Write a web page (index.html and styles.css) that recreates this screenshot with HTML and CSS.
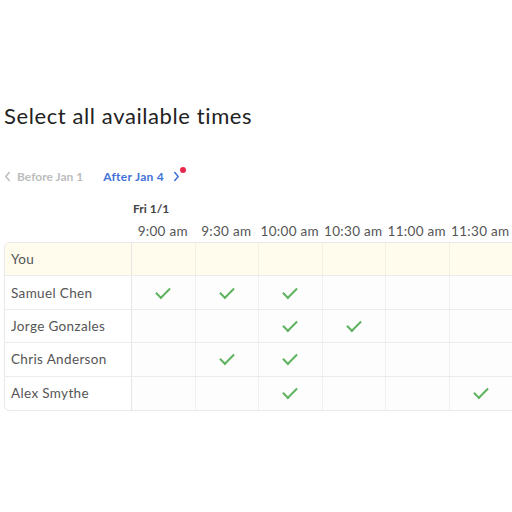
FILE: index.html
```html
<!DOCTYPE html>
<html>
<head>
<meta charset="utf-8">
<link rel="stylesheet" href="styles.css">
</head>
<body>
<div class="page">
  <h1 class="title">Select all available times</h1>
  <div class="nav">
    <span class="nav-prev"><svg class="chev" viewBox="0 0 8 12" width="7" height="11"><path d="M6 1.5 L2 6 L6 10.5" fill="none" stroke="currentColor" stroke-width="1.8" stroke-linecap="round" stroke-linejoin="round"/></svg>Before Jan 1</span>
    <span class="nav-next">After Jan 4<svg class="chev" viewBox="0 0 8 12" width="7" height="11"><path d="M2 1.5 L6 6 L2 10.5" fill="none" stroke="currentColor" stroke-width="1.8" stroke-linecap="round" stroke-linejoin="round"/></svg><span class="dot"></span></span>
  </div>
  <div class="grid head">
    <div class="hcell"></div>
    <div class="hcell date">Fri 1/1</div>
  </div>
  <div class="grid head times">
    <div></div>
    <div>9:00 am</div><div>9:30 am</div><div>10:00 am</div><div>10:30 am</div><div>11:00 am</div><div>11:30 am</div>
  </div>
  <div class="table">
    <div class="grid row you">
      <div class="name">You</div><div class="cell"></div><div class="cell"></div><div class="cell"></div><div class="cell"></div><div class="cell"></div><div class="cell"></div>
    </div>
    <div class="grid row">
      <div class="name">Samuel Chen</div><div class="cell ok"></div><div class="cell ok"></div><div class="cell ok"></div><div class="cell"></div><div class="cell"></div><div class="cell"></div>
    </div>
    <div class="grid row">
      <div class="name">Jorge Gonzales</div><div class="cell"></div><div class="cell"></div><div class="cell ok"></div><div class="cell ok"></div><div class="cell"></div><div class="cell"></div>
    </div>
    <div class="grid row">
      <div class="name">Chris Anderson</div><div class="cell"></div><div class="cell ok"></div><div class="cell ok"></div><div class="cell"></div><div class="cell"></div><div class="cell"></div>
    </div>
    <div class="grid row last">
      <div class="name">Alex Smythe</div><div class="cell"></div><div class="cell"></div><div class="cell ok"></div><div class="cell"></div><div class="cell"></div><div class="cell ok"></div>
    </div>
  </div>
</div>
</body>
</html>
```
FILE: styles.css
```css
html, body {
  margin: 0;
  padding: 0;
  background: #ffffff;
  overflow: hidden;
}
.page {
  width: 512px;
  height: 512px;
  overflow: hidden;
  padding-left: 4px;
  box-sizing: border-box;
  font-family: Lato, "Noto Sans", sans-serif;
}
.title {
  margin: 0;
  padding-top: 102px;
  font-size: 22px;
  font-weight: 400;
  color: #222;
  line-height: 28px;
  letter-spacing: 0.6px;
}
.nav {
  display: flex;
  align-items: center;
  margin-top: 38px;
  height: 16px;
  font-size: 12px;
  font-weight: 700;
}
.nav-prev {
  color: #bdbdbd;
  display: flex;
  align-items: center;
  gap: 6px;
}
.nav-next {
  color: #3f72d8;
  display: flex;
  align-items: center;
  gap: 9px;
  margin-left: 20px;
  position: relative;
  letter-spacing: 0.3px;
}
.dot {
  position: absolute;
  right: -6px;
  top: -2px;
  width: 6px;
  height: 6px;
  border-radius: 50%;
  background: #e8284a;
}
.grid {
  display: grid;
  grid-template-columns: 127px repeat(6, 63.5px);
  width: 508px;
}
.head {
  margin-top: 17px;
  font-size: 12px;
  font-weight: 700;
  color: #444;
  height: 16px;
  line-height: 16px;
}
.date {
  padding-left: 2px;
}
.times {
  margin-top: 6px;
  font-size: 13.5px;
  font-weight: 400;
  color: #555;
  letter-spacing: 0.3px;
}
.times div {
  text-align: center;
  white-space: nowrap;
}
.table {
  margin-top: 3px;
  width: 520px;
  border: 1px solid #e9e9e9;
  border-radius: 5px;
  overflow: hidden;
}
.row {
  height: 33.4px;
  border-bottom: 1px solid #ececec;
  box-sizing: border-box;
}
.row.last {
  border-bottom: none;
}
.you {
  background: #fffcee;
}
.name {
  font-size: 13.5px;
  color: #555;
  padding-left: 6px;
  display: flex;
  align-items: center;
  border-right: 1px solid #e6e6e6;
  letter-spacing: 0.35px;
}
.cell {
  border-right: 1px solid #f0f0f0;
  position: relative;
  background: #fdfdfd;
}
.you .cell {
  background: #fffcee;
  border-right-color: #f3f0e4;
}
.ok::after {
  content: "";
  position: absolute;
  left: 50%;
  top: 50%;
  width: 12px;
  height: 6px;
  border-left: 2px solid #5fb35f;
  border-bottom: 2px solid #5fb35f;
  transform: translate(-50%, -70%) rotate(-45deg);
}
```
